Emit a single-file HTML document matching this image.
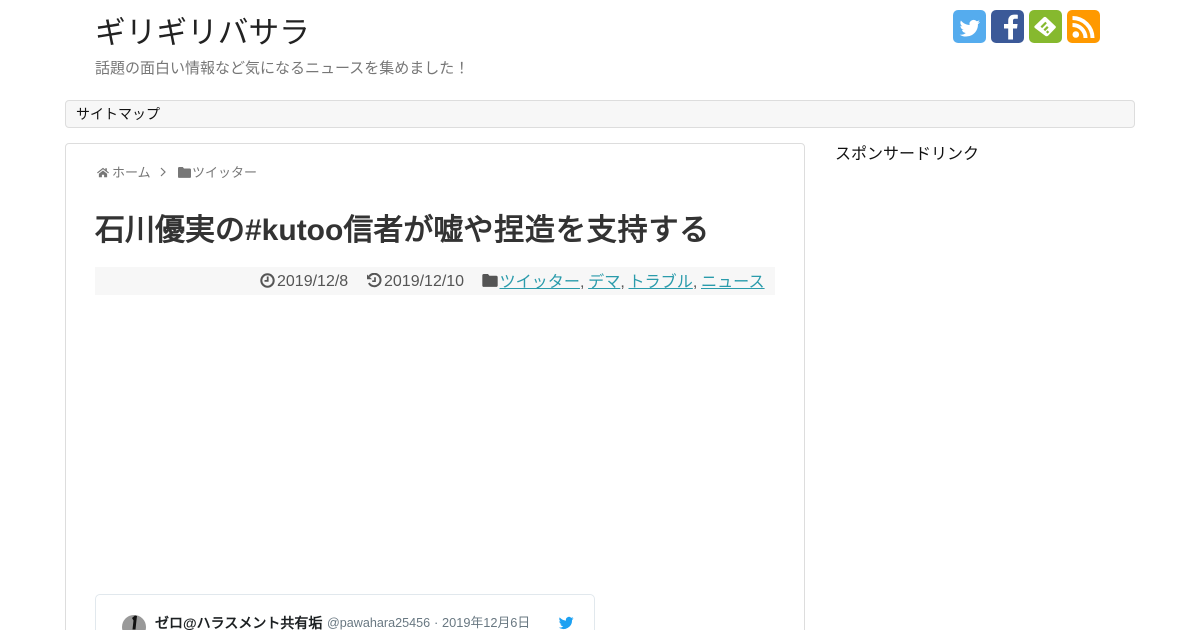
<!DOCTYPE html>
<html lang="ja"><head><meta charset="utf-8"><title>ギリギリバサラ</title>
<style>
html,body{margin:0;padding:0;background:#fff;width:1200px;height:630px;overflow:hidden}
body{font-family:"Liberation Sans","WenQuanYi Zen Hei",sans-serif;position:relative}
.a{position:absolute;white-space:nowrap}
a{color:#2a9bab;text-decoration:underline}
svg{position:absolute;display:block}
.s{position:absolute;top:10px;width:33px;height:33px;border-radius:5px}
</style></head><body>
<div class="a" style="left:95px;top:12px;font-size:30.700px;line-height:42px;color:#222">ギリギリバサラ</div>
<div class="a" style="left:95px;top:59px;font-size:15px;line-height:20px;color:#777">話題の面白い情報など気になるニュースを集めました！</div>

<div class="s" style="left:953px;background:#55acee"><svg width="33" height="33" viewBox="-1.600 -2.500 27 27" style="left:0;top:0"><path fill="#fff" d="M20.500 7.200c-.6.3-1.300.5-2 .6.700-.4 1.300-1.100 1.500-1.900-.7.4-1.400.7-2.200.8a3.400 3.400 0 0 0-5.800 3.100c-2.800-.1-5.400-1.500-7.100-3.600-.9 1.600-.4 3.600 1.100 4.600-.6 0-1.100-.2-1.500-.4 0 1.600 1.100 3.100 2.700 3.400-.5.1-1 .2-1.500.1.400 1.400 1.700 2.300 3.200 2.400a6.900 6.900 0 0 1-5 1.400 9.700 9.700 0 0 0 14.900-8.600c.7-.5 1.200-1.100 1.700-1.900z"/></svg></div>
<div class="s" style="left:991px;background:#3b5998"><svg width="33" height="33" viewBox="0 0 33 33" style="left:0;top:0"><path fill="#fff" d="M22 29.500V18.500h4l.6-4.500H22v-3c0-1.300.4-2.200 2.300-2.200h2.500V4.800c-.4-.1-1.900-.2-3.600-.2-3.600 0-6 2.200-6 6.100V14H13v4.500h4.200v11z"/></svg></div>
<div class="s" style="left:1029px;background:#86b92e"><svg width="33" height="33" viewBox="0 0 33 33" style="left:0;top:0"><path fill="#fff" d="M15 8a2 2 0 0 1 2.800 0l9 8.500a1.500 1.500 0 0 1 0 2.200l-7 7.300a2.500 2.500 0 0 1-3.400 0l-10-7.500a1.500 1.500 0 0 1 0-2.200z" transform="translate(-.5 -.5)"/><path fill="#86b92e" d="M12 17.500l4.800-4.800 1.600 1.600-4.800 4.800zM15 20.500l3.500-3.500 1.600 1.600-3.500 3.500zM17.500 23l1.600-1.600 1.600 1.600-1.600 1.600z" transform="translate(-.5 -1)"/></svg></div>
<div class="s" style="left:1067px;background:#ff9900"><svg width="33" height="33" viewBox="0 0 33 33" style="left:0;top:0"><circle cx="8.800" cy="24.500" r="3.300" fill="#fff"/><path fill="none" stroke="#fff" stroke-width="4" d="M5.500 15a13 13 0 0 1 13 13"/><path fill="none" stroke="#fff" stroke-width="4" d="M5.500 8a20 20 0 0 1 20 20"/></svg></div>

<div class="a" style="left:65px;top:100px;width:1068px;height:26px;background:#f7f7f7;border:1px solid #ddd;border-radius:4px"></div>
<div class="a" style="left:76px;top:104px;font-size:14px;line-height:20px;color:#111">サイトマップ</div>

<div class="a" style="left:65px;top:143px;width:738px;height:500px;background:#fff;border:1px solid #ddd;border-radius:4px"></div>

<svg width="12" height="11" viewBox="0 0 13 12" style="left:97px;top:167px"><path fill="#777" d="M6.500.8 0 6l.8 1L6.500 2.400 12.200 7l.8-1-2.300-1.800V1.400H9v1.400zM2 7.400v3.800h3.300V8.400h2.400v2.800H11V7.400L6.500 3.800z"/></svg>
<div class="a" style="left:112px;top:164px;font-size:13px;line-height:18px;color:#777">ホーム</div>
<svg width="8" height="10" viewBox="0 0 8 10" style="left:159px;top:167px"><path fill="none" stroke="#777" stroke-width="1.200" d="M2 1l4 4-4 4"/></svg>
<svg width="13" height="11" viewBox="0 0 13 11" style="left:178px;top:167px"><path fill="#777" d="M1.200 0h3.600l1.200 1.500h5.800c.7 0 1.200.5 1.200 1.200v7c0 .7-.5 1.200-1.200 1.200H1.200C.5 10.900 0 10.400 0 9.700V1.200C0 .5.500 0 1.200 0z"/></svg>
<div class="a" style="left:192px;top:164px;font-size:13px;line-height:18px;color:#777">ツイッター</div>

<div class="a" style="left:95px;top:211px;font-size:30px;line-height:40px;font-weight:bold;color:#333">石川優実の#kutoo信者が嘘<span style="letter-spacing:.85px">や捏造を支持す</span>る</div>

<div class="a" style="left:95px;top:267px;width:680px;height:28px;background:#f7f7f7"></div>
<svg width="15" height="15" viewBox="0 0 15 15" style="left:260px;top:273px"><circle cx="7.500" cy="7.500" r="6.200" fill="none" stroke="#555" stroke-width="2"/><path fill="none" stroke="#555" stroke-width="1.800" d="M7.700 3.500v4.400H4.500"/></svg>
<div class="a" style="left:277px;top:272px;font-size:16px;line-height:20px;color:#555">2019/12/8</div>
<svg width="15" height="15" viewBox="0 0 15 15" style="left:367px;top:273px"><path fill="none" stroke="#555" stroke-width="2" d="M2.200 3.500A6.200 6.200 0 1 1 1.900 10"/><path fill="#555" d="M0 1.500 5 6.200H0z"/><path fill="none" stroke="#555" stroke-width="1.700" d="M8 4.200v4H5.200"/></svg>
<div class="a" style="left:384px;top:272px;font-size:16px;line-height:20px;color:#555">2019/12/10</div>
<svg width="16" height="13" viewBox="0 0 13 11" style="left:482px;top:274px"><path fill="#555" d="M1.200 0h3.600l1.200 1.500h5.800c.7 0 1.200.5 1.200 1.200v7c0 .7-.5 1.200-1.200 1.200H1.200C.5 10.900 0 10.400 0 9.700V1.200C0 .5.500 0 1.200 0z"/></svg>
<div class="a" style="left:499.500px;top:272px;font-size:16.100px;line-height:20px;color:#555;word-spacing:-.8px"><a>ツイッター</a>, <a>デマ</a>, <a>トラブル</a>, <a>ニュース</a></div>

<div class="a" style="left:835px;top:145px;font-size:16px;line-height:20px;color:#111">スポンサードリンク</div>

<div class="a" style="left:95px;top:594px;width:498px;height:60px;background:#fff;border:1px solid #e1e8ed;border-radius:5px"></div>
<svg width="24" height="15" viewBox="0 0 24 15" style="left:122px;top:615px"><circle cx="12" cy="12" r="12" fill="#999"/><path fill="#111" d="M10 3l3-2.500 2 .5-.5 4-1 9.500h-3l1-9z"/></svg>
<div class="a" style="left:155px;top:613px;font-size:14px;line-height:20px;font-weight:bold;color:#1c2022">ゼロ@ハラスメント共有垢</div>
<div class="a" style="left:327px;top:614px;font-size:12.600px;line-height:18px;color:#697882">@pawahara25456</div>
<div class="a" style="left:434px;top:614px;font-size:13px;line-height:18px;color:#697882">·</div>
<div class="a" style="left:442px;top:614px;font-size:12.800px;line-height:18px;color:#697882">2019年12月6日</div>
<svg width="16" height="14" viewBox="3 5 18 15" style="left:558px;top:616px"><path fill="#1da1f2" d="M20.500 7.200c-.6.3-1.300.5-2 .6.700-.4 1.300-1.100 1.500-1.900-.7.4-1.400.7-2.200.8a3.400 3.400 0 0 0-5.800 3.100c-2.800-.1-5.400-1.500-7.100-3.600-.9 1.600-.4 3.600 1.100 4.600-.6 0-1.100-.2-1.500-.4 0 1.600 1.100 3.100 2.700 3.400-.5.1-1 .2-1.500.1.400 1.400 1.700 2.300 3.200 2.400a6.900 6.900 0 0 1-5 1.400 9.700 9.700 0 0 0 14.900-8.600c.7-.5 1.200-1.100 1.700-1.900z"/></svg>
</body></html>
